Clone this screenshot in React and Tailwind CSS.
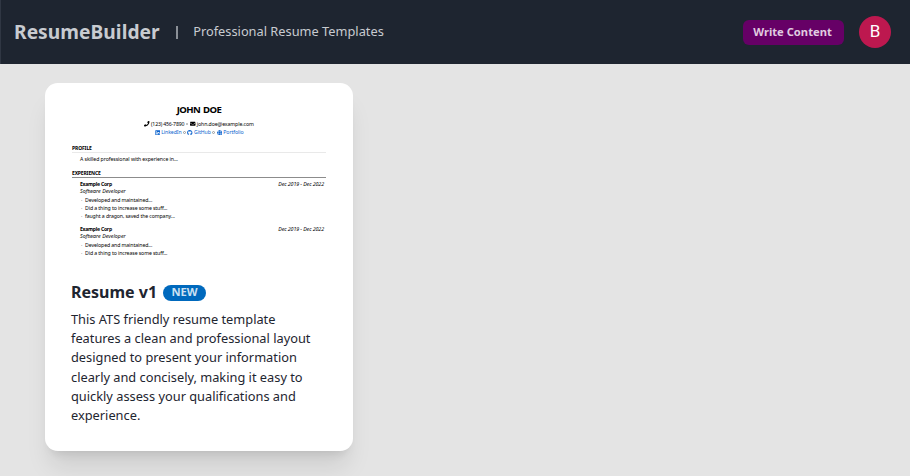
import { FaPhone, FaEnvelope, FaLinkedin, FaGithub, FaGlobe } from "react-icons/fa";

function Ring() {
  return <span className="mx-[0.5px] size-[2.5px] rounded-full border border-[#999]" />;
}

function Job({ bullets }) {
  return (
    <div className="pl-[8px] pr-[2px]">
      <div className="flex h-[7px] justify-between leading-[8px]">
        <span className="text-[5.1px] font-bold tracking-[-0.25px]">Example Corp</span>
        <span className="text-[5.3px] italic">Dec 2019 - Dec 2022</span>
      </div>
      <div className="h-[8px] text-[5.3px] italic leading-[8px] tracking-[0.02px]">Software Developer</div>
      <ul className="pt-[1px]">
        {bullets.map((b) => (
          <li key={b} className="flex h-[8px] leading-[8px]">
            <span className="w-[5px] pl-[1px] text-[#555]">·</span>
            <span>{b}</span>
          </li>
        ))}
      </ul>
    </div>
  );
}

function ResumePreview() {
  return (
    <div className="ml-[1px] h-[180px] w-[254px] whitespace-nowrap pt-[19px] text-[5.2px] tracking-[-0.1px] text-black">
      <div className="h-[14px] text-center text-[9.6px] font-bold leading-[15px] tracking-[-0.6px] [word-spacing:1px]">JOHN DOE</div>
      <div className="mt-[4px] flex h-[8px] items-center justify-center gap-[1.2px] leading-[8px]">
        <FaPhone size={5.5} />
        <span className="tracking-[-0.18px]">(123) 456-7890</span>
        <Ring />
        <FaEnvelope size={5.5} />
        <span>john.doe@example.com</span>
      </div>
      <div className="flex h-[9px] items-center justify-center gap-[1.2px] leading-[9px] text-[#0b63ce]">
        <FaLinkedin size={5.5} />
        <span>LinkedIn</span>
        <Ring />
        <FaGithub size={5.5} />
        <span>GitHub</span>
        <Ring />
        <FaGlobe size={5.5} />
        <span>Portfolio</span>
      </div>
      <div className="mt-[6px] h-[10px] border-b border-[#e9e9e9] text-[5px] font-bold leading-[10px] tracking-[-0.12px]">PROFILE</div>
      <div className="mt-[2px] h-[8px] pl-[8px] leading-[8px] tracking-[-0.08px]">
        A skilled professional with experience in...
      </div>
      <div className="mb-[2px] mt-[5px] h-[10px] border-b border-[#8c8c8c] text-[5px] font-bold leading-[10px] tracking-[-0.15px]">
        EXPERIENCE
      </div>
      <Job bullets={["Developed and maintained...", "Did a thing to increase some stuff...", "faught a dragon, saved the company..."]} />
      <div className="h-[5px]" />
      <Job bullets={["Developed and maintained...", "Did a thing to increase some stuff..."]} />
    </div>
  );
}

export default function App() {
  return (
    <div className="h-[476px] w-[910px] overflow-hidden bg-[#e4e4e4] font-['Noto_Sans','Open_Sans',sans-serif] text-[#1e2530]">
      <header className="flex h-16 items-center border-l border-[#303743] bg-[#1e2530] pl-[13px] pr-[19px] text-[#c8cbd0]">
        <h1 className="text-[19.2px] font-bold leading-6 tracking-[0.04px]">ResumeBuilder</h1>
        <span className="ml-[16px] h-[13px] w-[2px] bg-[#8b9097]" />
        <span className="ml-[15.5px] text-[12.8px]">Professional Resume Templates</span>
        <button className="ml-auto h-[25px] w-[101px] rounded-[6px] bg-[#660066] pr-[2px] text-[11.2px] font-bold text-[#e0cce0]">
          Write Content
        </button>
        <div className="ml-[15px] flex size-8 items-center justify-center rounded-full bg-[#bd184f] font-[Roboto,sans-serif] text-[17px] text-white">
          B
        </div>
      </header>
      <main className="pl-[45px] pt-[19px]">
        <article className="h-[368px] w-[308px] rounded-[12.8px] bg-white px-[26px] shadow-[0_20px_25px_-5px_rgba(0,0,0,0.1),0_8px_10px_-6px_rgba(0,0,0,0.1)]">
          <ResumePreview />
          <div className="mt-[17px] flex h-6 items-center gap-[6px]">
            <h2 className="text-[16px] font-bold leading-6">Resume v1</h2>
            <span className="mt-px flex h-4 w-[43px] items-center justify-center rounded-full bg-[#0069bd] text-[11.2px] font-bold text-[#cce1f2]">
              NEW
            </span>
          </div>
          <p className="mt-[6px] w-[256px] text-[12.8px] leading-[19.2px]">
            This ATS friendly resume template features a clean and professional layout designed to present your
            information clearly and concisely, making it easy to quickly assess your qualifications and experience.
          </p>
        </article>
      </main>
    </div>
  );
}
